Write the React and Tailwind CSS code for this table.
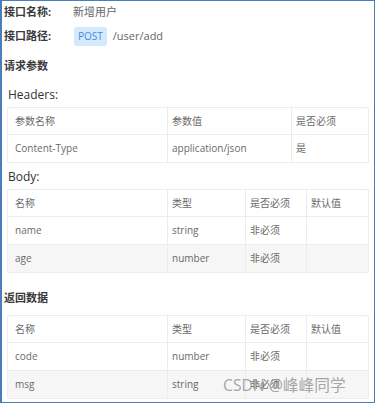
import React from 'react';

const font = { fontFamily: '"Open Sans", "Noto Sans CJK SC", sans-serif' };

const headers = {
    cols: 'grid-cols-[159px_124px_78px]',
    head: ['参数名称', '参数值', '是否必须'],
    rows: [['Content-Type', 'application/json', '是']],
};

const body = {
    cols: 'grid-cols-[159px_78px_61px_63px]',
    head: ['名称', '类型', '是否必须', '默认值'],
    rows: [
        ['name', 'string', '非必须', ''],
        ['age', 'number', '非必须', ''],
    ],
};

const result = {
    cols: 'grid-cols-[159px_78px_61px_63px]',
    head: ['名称', '类型', '是否必须', '默认值'],
    rows: [
        ['code', 'number', '非必须', ''],
        ['msg', 'string', '非必须', ''],
    ],
};

const Table = ({ data }) => (
    <div className="ml-[5px] w-[362px] border border-[#ececec] rounded-[2px] text-[10px] text-[#6a6a6a]">
        <div className={`grid ${data.cols} h-[26px]`}>
            {data.head.map((h, i) => (
                <div key={i} className={`h-full flex items-center ${i === 0 ? 'pl-[7px]' : 'pl-[4px] border-l border-[#ececec]'}`}>{h}</div>
            ))}
        </div>
        {data.rows.map((row, r) => (
            <div key={r} className={`grid ${data.cols} h-[28px] border-t border-[#ececec] ${r % 2 === 1 ? 'bg-[#f6f6f6]' : 'bg-white'}`}>
                {row.map((c, i) => (
                    <div key={i} className={`h-full flex items-center ${i === 0 ? 'pl-[7px]' : 'pl-[4px] border-l border-[#ececec]'}`}>{c}</div>
                ))}
            </div>
        ))}
    </div>
);

export default function App() {
    return (
        <div className="w-[375px] h-[404px] bg-white" style={font}>
            <div className="relative h-[403px] border border-l-2 border-[#4a7ebb] overflow-hidden">
                {/* 接口信息 */}
                <div className="flex items-center h-[22px] pl-[2px]">
                    <span className="w-[69px] text-[11px] font-bold text-[#3a3a3a]">接口名称:</span>
                    <span className="text-[11px] text-[#666]">新增用户</span>
                </div>
                <div className="flex items-center h-[26px] pl-[2px]">
                    <span className="w-[70px] text-[11px] font-bold text-[#3a3a3a]">接口路径:</span>
                    <span className="h-[19px] px-[4px] flex items-center rounded-[3px] bg-[#d5e8fc] text-[10px] text-[#3d8fe0]">POST</span>
                    <span className="ml-[6px] text-[11px] text-[#666]">/user/add</span>
                </div>
                <div className="mt-[7px] h-[20px] flex items-center pl-[2px] text-[11px] font-bold text-[#3a3a3a]">请求参数</div>

                <div className="mt-[7px] h-[24px] flex items-center pl-[6px] text-[12px] text-[#333]">Headers:</div>
                <Table data={headers} />

                <div className="mt-[2px] h-[24px] flex items-center pl-[6px] text-[12px] text-[#333]">Body:</div>
                <Table data={body} />

                <div className="mt-[15px] h-[20px] flex items-center pl-[2px] text-[11px] font-bold text-[#3a3a3a]">返回数据</div>
                <div className="mt-[7px]">
                    <Table data={result} />
                </div>

                {/* watermark */}
                <div className="absolute left-[221px] top-[377px] text-[15.7px] text-[#9a9a9a]/90 whitespace-nowrap leading-none">CSDN @峰峰同学</div>
            </div>
        </div>
    );
}
